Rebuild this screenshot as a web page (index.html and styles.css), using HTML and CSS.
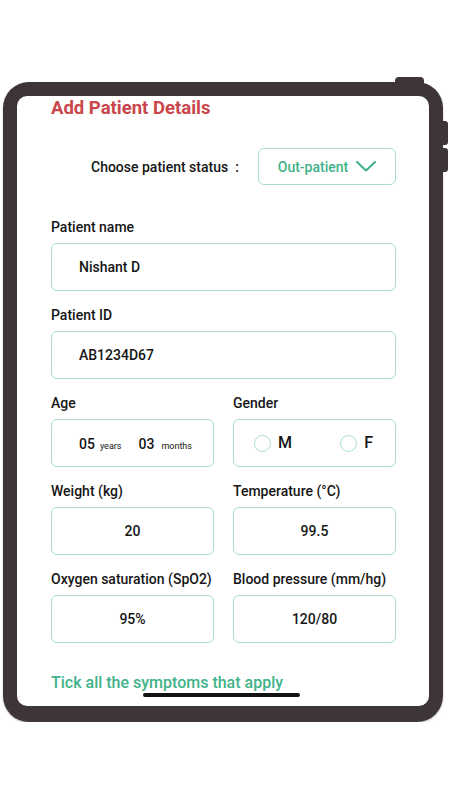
FILE: index.html
```html
<!DOCTYPE html>
<html lang="en">
<head>
<meta charset="utf-8">
<title>Add Patient Details</title>
<link rel="stylesheet" href="styles.css">
</head>
<body>
<div class="device">
  <span class="bump"></span>
  <span class="side-btn side-btn-1"></span>
  <span class="side-btn side-btn-2"></span>
  <div class="screen">
    <h1 class="title">Add Patient Details</h1>
    <div class="status-row">
      <span class="status-label">Choose patient status</span>
      <span class="colon">:</span>
      <div class="select">
        <span>Out-patient</span>
        <svg class="chev" width="20" height="11" viewBox="0 0 20 11"><polyline points="1,1 10,9.5 19,1" fill="none" stroke="#3fb187" stroke-width="2" stroke-linecap="round" stroke-linejoin="round"/></svg>
      </div>
    </div>

    <div class="field first">
      <div class="label">Patient name</div>
      <div class="input">Nishant D</div>
    </div>
    <div class="field">
      <div class="label">Patient ID</div>
      <div class="input">AB1234D67</div>
    </div>

    <div class="grid">
      <div class="cell">
        <div class="label">Age</div>
        <div class="input age">
          <span class="num">05</span><span class="unit u-years">years</span>
          <span class="num n-months">03</span><span class="unit u-months">months</span>
        </div>
      </div>
      <div class="cell">
        <div class="label">Gender</div>
        <div class="input gender">
          <span class="opt"><span class="radio"></span><span class="opt-text">M</span></span>
          <span class="opt"><span class="radio"></span><span class="opt-text">F</span></span>
        </div>
      </div>
      <div class="cell">
        <div class="label">Weight (kg)</div>
        <div class="input center">20</div>
      </div>
      <div class="cell">
        <div class="label">Temperature (°C)</div>
        <div class="input center">99.5</div>
      </div>
      <div class="cell">
        <div class="label">Oxygen saturation (SpO2)</div>
        <div class="input center">95%</div>
      </div>
      <div class="cell">
        <div class="label">Blood pressure (mm/hg)</div>
        <div class="input center">120/80</div>
      </div>
    </div>

    <p class="symptoms">Tick all the symptoms that apply</p>
  </div>
  <span class="home-bar"></span>
</div>
</body>
</html>
```

FILE: styles.css
```css
html, body {
  margin: 0;
  padding: 0;
  background: #ffffff;
}

body {
  padding-top: 82px;
  font-family: Roboto, "Noto Sans", "Liberation Sans", sans-serif;
  color: #161616;
}

.device {
  position: relative;
  box-sizing: border-box;
  width: 440px;
  height: 640px;
  margin-left: 3px;
  border: 14px solid #3e3636;
  border-bottom-width: 16px;
  border-radius: 26px;
  background: #3e3636;
  box-shadow: 0 1px 2px rgba(0, 0, 0, 0.25);
}

.bump {
  position: absolute;
  top: -19px;
  left: 378px;
  width: 29px;
  height: 7px;
  background: #3e3636;
  border-radius: 4px 4px 0 0;
}

.side-btn {
  position: absolute;
  left: 422px;
  width: 9px;
  background: #3e3636;
  border-radius: 0 3px 3px 0;
}
.side-btn-1 { top: 25px; height: 24px; }
.side-btn-2 { top: 52px; height: 24px; }

.screen {
  box-sizing: border-box;
  height: 100%;
  background: #ffffff;
  border-radius: 10px;
  overflow: hidden;
  padding: 0 33px 0 34px;
}

.title {
  margin: 0;
  font-size: 18.5px;
  line-height: 24px;
  font-weight: 700;
  color: #c9464a;
}

.status-row {
  display: flex;
  align-items: center;
  margin-top: 28px;
  padding-left: 40px;
  height: 37px;
}

.status-label {
  font-size: 14px;
  font-weight: 500;
  line-height: 20px;
}

.colon {
  margin-left: auto;
  margin-right: 19px;
  font-size: 14px;
  font-weight: 500;
}

.select {
  box-sizing: border-box;
  width: 138px;
  height: 37px;
  border: 1px solid #a9dfcb;
  border-radius: 6px;
  display: flex;
  align-items: center;
  justify-content: center;
  gap: 8px;
  color: #3fb187;
  font-size: 14px;
  font-weight: 500;
}

.chev {
  display: block;
}

.field.first {
  margin-top: 32px;
}

.field {
  margin-bottom: 14px;
}

.label {
  font-size: 14px;
  line-height: 20px;
  font-weight: 500;
  color: #161616;
  white-space: nowrap;
}

.input {
  box-sizing: border-box;
  margin-top: 6px;
  height: 48px;
  border: 1px solid #a9dfcb;
  border-radius: 6px;
  display: flex;
  align-items: center;
  padding-left: 27px;
  font-size: 14px;
  font-weight: 500;
  color: #161616;
}

.input.center {
  justify-content: center;
  padding-left: 0;
}

.grid {
  display: grid;
  grid-template-columns: 1fr 1fr;
  column-gap: 19px;
  row-gap: 14px;
}

.age {
  align-items: baseline;
  padding-top: 14px;
}

.age .num {
  font-size: 14px;
  line-height: 20px;
}

.age .unit {
  font-size: 9px;
  font-weight: 400;
}

.u-years { margin-left: 5px; }
.n-months { margin-left: 17px; }
.u-months { margin-left: 7px; }

.gender {
  justify-content: space-between;
  padding: 0 22px 0 20px;
}

.opt {
  display: flex;
  align-items: center;
  gap: 7px;
}

.radio {
  box-sizing: border-box;
  width: 17px;
  height: 17px;
  border: 1.5px solid #a9dfcb;
  border-radius: 50%;
}

.opt-text {
  font-size: 16px;
  font-weight: 500;
  line-height: 20px;
}

.symptoms {
  margin: 30px 0 0;
  font-size: 16px;
  line-height: 20px;
  font-weight: 500;
  color: #41b38a;
}

.home-bar {
  position: absolute;
  left: 126px;
  bottom: 9px;
  width: 157px;
  height: 4px;
  border-radius: 2px;
  background: #121212;
}
```
